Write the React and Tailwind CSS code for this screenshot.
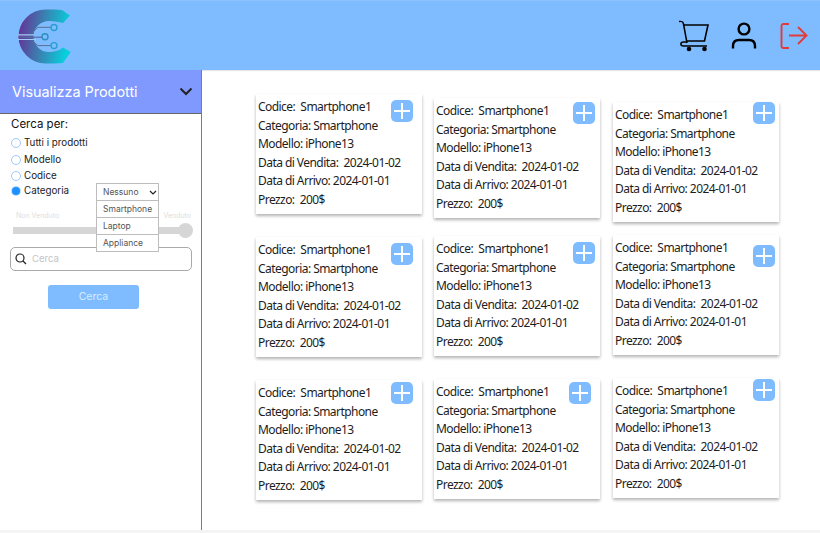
import React from "react";

const Logo = () => (
  <svg width="60" height="60" viewBox="0 0 60 60" className="ml-[15px]">
    <defs>
      <linearGradient id="g" x1="0" y1="0" x2="1" y2="0.15">
        <stop offset="0" stopColor="#6a2a94" />
        <stop offset="0.5" stopColor="#3a80b0" />
        <stop offset="1" stopColor="#08cfdc" />
      </linearGradient>
    </defs>
    <path d="M47 4C42 3.5 37 3.5 30.5 3.5A27 27 0 0 0 30.5 57.5C37 57.5 43 57.5 48 57L55.7 46L48 41.5C44 45 39 46 34 46A15.5 15.5 0 0 1 34 15C39 15 44 16 48 17L55 9.5Z" fill="url(#g)" />
    <path d="M3 28.8H19M3 33.5H21" stroke="#a8c8f4" strokeWidth="1.2" />
    <path d="M17 27L23 21.3H36" fill="none" stroke="#5b7090" strokeWidth="1" />
    <path d="M3 31.2H27" fill="none" stroke="#5b6aa0" strokeWidth="1.2" />
    <path d="M17 35L23 39.6H36" fill="none" stroke="#5b7090" strokeWidth="1" />
    <circle cx="39" cy="21.5" r="3" fill="none" stroke="#25a0cf" strokeWidth="1.4" />
    <circle cx="30" cy="30.8" r="3" fill="none" stroke="#2a8fc0" strokeWidth="1.4" />
    <circle cx="39" cy="39.6" r="3" fill="none" stroke="#25a0cf" strokeWidth="1.4" />
  </svg>
);

const Cart = () => (
  <svg width="34" height="36" viewBox="0 0 34 36" fill="none" stroke="#000" strokeWidth="1.5">
    <path d="M1 3.5C4 3 5 3.5 5.5 6L9 25" />
    <path d="M5.5 7H30L26.5 23H8.3" strokeWidth="1.6" />
    <path d="M29 28H5.5C2 28 2 24 5.5 24H9" />
    <circle cx="11" cy="31" r="2.3" fill="#000" stroke="none" />
    <circle cx="26.5" cy="31" r="2.3" fill="#000" stroke="none" />
  </svg>
);

const User = () => (
  <svg width="26" height="30" viewBox="0 0 26 30" fill="none" stroke="#000" strokeWidth="2.4">
    <circle cx="13" cy="8" r="5.4" />
    <path d="M2 27.5V25C2 21 4.5 19 8 19H18C21.5 19 24 21 24 25V27.5" />
  </svg>
);

const Exit = () => (
  <svg width="28" height="28" viewBox="0 0 28 28" fill="none" stroke="#e03c3c" strokeWidth="1.9">
    <path d="M9 2H3.5C2.3 2 1.5 2.8 1.5 4V24C1.5 25.2 2.3 26 3.5 26H9" />
    <path d="M9 13.5H26.5M18 5L26.5 13.5L18 22" />
  </svg>
);

const Radio = ({ label, checked, mb }) => (
  <label className={`flex items-center gap-[3px] text-[9.8px] leading-[12px] text-[#222] ${mb}`}>
    {checked ? (
      <span className="ml-[1px] h-[8px] w-[8px] rounded-full bg-[#1e90ff] ring-1 ring-[#b9dcff]" />
    ) : (
      <span className="h-[10px] w-[10px] rounded-full border border-[#9cc8f5] bg-white" />
    )}
    <span className={checked ? "ml-[1px]" : ""}>{label}</span>
  </label>
);

const Card = ({ cls, plus }) => (
  <div className={`relative h-[120px] w-[166px] bg-white pl-[2px] pt-[4px] text-[12px] leading-[18.6px] tracking-[-0.55px] text-[#1d1d1d] shadow-[0_2px_3px_rgba(0,0,0,0.3)] ${cls}`} style={{ fontFamily: '"Noto Sans", sans-serif' }}>
    <div className="whitespace-pre">Codice:  Smartphone1</div>
    <div className="whitespace-pre">Categoria: Smartphone</div>
    <div className="whitespace-pre">Modello: iPhone13</div>
    <div className="whitespace-pre">Data di Vendita:  2024-01-02</div>
    <div className="whitespace-pre">Data di Arrivo: 2024-01-01</div>
    <div className="whitespace-pre">Prezzo:  200$</div>
    <div className={`absolute flex h-[22px] w-[22px] items-center justify-center rounded-[5px] bg-[#7fbcff] ${plus}`}>
      <svg width="16" height="16" viewBox="0 0 16 16" stroke="#fff" strokeWidth="2"><path d="M8 0V16M0 8H16" /></svg>
    </div>
  </div>
);

export default function App() {
  return (
    <div className="flex h-[533px] w-[820px] flex-col overflow-hidden bg-white" style={{ fontFamily: 'Inter, sans-serif' }}>
      <header className="flex h-[70px] shrink-0 items-center justify-between border-t border-[#8cc3ff] bg-[#7fbcff] shadow-[0_1px_1px_rgba(0,0,0,0.1)]">
        <Logo />
        <div className="flex items-center">
          <Cart />
          <div className="ml-[19px]"><User /></div>
          <div className="ml-[23px] mr-[12px]"><Exit /></div>
        </div>
      </header>
      <div className="flex h-[460px] shrink-0">
        <aside className="h-full w-[202px] shrink-0 border-r border-[#7d7d7d]">
          <div className="flex h-[44px] items-center justify-between border-b border-[#666] bg-[#8099ff] pl-[12px] pr-[8px] text-[14.4px] text-white">
            <span>Visualizza Prodotti</span>
            <svg width="14" height="9" viewBox="0 0 14 9" fill="none" stroke="#222" strokeWidth="2"><path d="M1.5 1.5L7 7L12.5 1.5" /></svg>
          </div>
          <div className="relative pl-[11px] pt-[3px]">
            <div className="mb-[5px] text-[11.5px] leading-[15px] text-[#111]">Cerca per:</div>
            <Radio label="Tutti i prodotti" mb="mb-[5px]" />
            <Radio label="Modello" mb="mb-[4px]" />
            <Radio label="Codice" mb="mb-[3px]" />
            <Radio label="Categoria" checked mb="" />
            <div className="mt-[15px] flex w-[180px] justify-between pl-[5px] text-[7px] leading-[8px] text-[#dedede]">
              <span>Non Venduto</span><span>Venduto</span>
            </div>
            <div className="mt-[3px] ml-[2px] flex h-[15px] w-[180px] items-center">
              <div className="h-[7px] flex-1 bg-[#d6d6d6]" />
              <div className="-ml-[1px] h-[15px] w-[15px] rounded-full bg-[#d6d6d6]" />
            </div>
            <div className="mt-[9px] -ml-[1px] flex h-[24px] w-[182px] items-center rounded-[5px] border border-[#aaa] pl-[4px] text-[9.5px] text-[#c4c4c4]">
              <svg width="12" height="12" viewBox="0 0 12 12" fill="none" stroke="#222" strokeWidth="1.2"><circle cx="5" cy="5" r="4" /><path d="M8 8L11 11" /></svg>
              <span className="ml-[5px]">Cerca</span>
            </div>
            <div className="mt-[14px] ml-[37px] flex h-[24px] w-[91px] items-center justify-center rounded-[3px] bg-[#7fbcff] text-[10.5px] text-[#d8ecff]">Cerca</div>
            <div className="absolute left-[96px] top-[69px] w-[63px] border border-[#bdbdbd] bg-white text-[8.5px] leading-[16px] text-[#555]">
              <div className="flex h-[17px] items-center justify-between border-b border-[#bdbdbd] pl-[6px] pr-[1px]">
                <span>Nessuno</span>
                <svg width="8" height="5" viewBox="0 0 8 5" fill="none" stroke="#222" strokeWidth="1.2"><path d="M1 1L4 4L7 1" /></svg>
              </div>
              <div className="h-[17px] border-b border-[#bdbdbd] pl-[6px]">Smartphone</div>
              <div className="h-[17px] border-b border-[#bdbdbd] pl-[6px]">Laptop</div>
              <div className="h-[16px] pl-[6px]">Appliance</div>
            </div>
          </div>
        </aside>
        <main className="flex">
          <div className="ml-[54px] flex w-[166px] flex-col">
            <Card cls="mt-[24px]" plus="left-[135px] top-[6px]" />
            <Card cls="mt-[23px]" plus="left-[135px] top-[6px]" />
            <Card cls="mt-[23px]" plus="left-[135px] top-[2px]" />
          </div>
          <div className="ml-[12px] flex w-[166px] flex-col">
            <Card cls="mt-[28px]" plus="left-[139px] top-[4px]" />
            <Card cls="mt-[18px]" plus="left-[139px] top-[6px]" />
            <Card cls="mt-[23px]" plus="left-[135px] top-[3px]" />
          </div>
          <div className="ml-[13px] flex w-[166px] flex-col">
            <Card cls="mt-[32px]" plus="left-[140px] top-0" />
            <Card cls="mt-[13px]" plus="left-[140px] top-[10px]" />
            <Card cls="mt-[23px]" plus="left-[140px] top-[1px]" />
          </div>
        </main>
      </div>
      <div className="flex-1 bg-[#f4f4f4]" />
    </div>
  );
}
